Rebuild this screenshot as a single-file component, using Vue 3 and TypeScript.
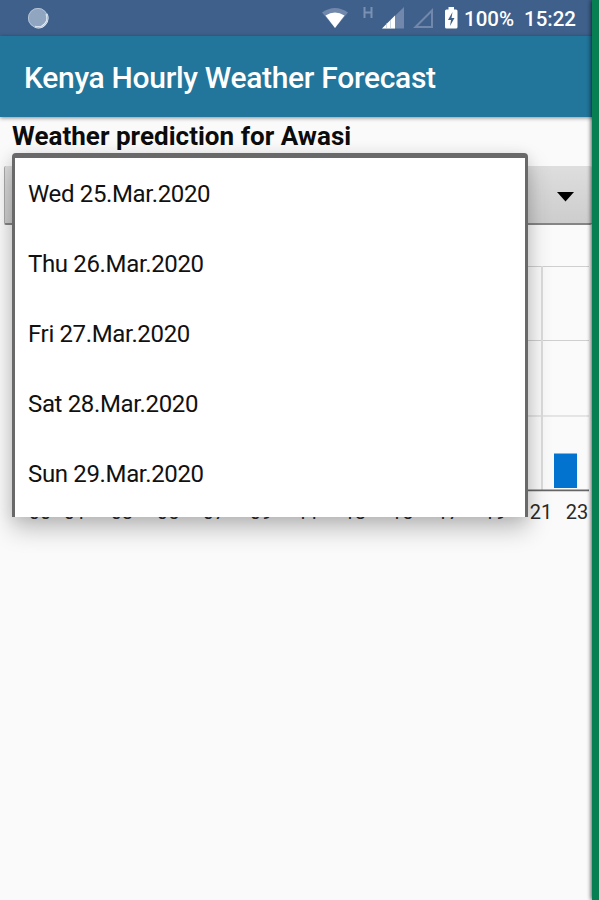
<script setup lang="ts">
const days: string[] = ['Wed 25.Mar.2020', 'Thu 26.Mar.2020', 'Fri 27.Mar.2020', 'Sat 28.Mar.2020', 'Sun 29.Mar.2020']

interface Tick { label: string; x: number }
const ticks: Tick[] = [
  { label: '00', x: 40 }, { label: '01', x: 75 }, { label: '03', x: 122 }, { label: '05', x: 168 },
  { label: '07', x: 214 }, { label: '09', x: 261 }, { label: '11', x: 308 }, { label: '13', x: 355 },
  { label: '15', x: 402 }, { label: '17', x: 448 }, { label: '19', x: 495 }, { label: '21', x: 541 },
  { label: '23', x: 577 },
]
const gridRows: number[] = [266.5, 340.5, 416]
</script>

<template>
  <div class="screen">
    <header class="status">
      <svg class="sync" width="22" height="22" viewBox="0 0 22 22">
        <circle cx="11" cy="11" r="10" fill="#8fa5c0" />
        <path d="M19.500 7A9.300 9.300 0 0 1 8 19.700" fill="none" stroke="#eef4f9" stroke-width="2.200" />
        <circle cx="11" cy="11" r="9.600" fill="none" stroke="#b4c3d5" stroke-width="1" />
      </svg>
      <svg class="icons" width="140" height="36" viewBox="320 0 140 36">
        <path d="M322 12.500Q335 3.500 348 12.500L335 28Z" fill="#7187ab" />
        <path d="M325.500 15.500Q335 9.500 344.500 15.500L335 28Z" fill="#fff" />
        <path d="M364.500 7V18M371.500 7V18M364.500 12.500H371.500" stroke="#7c90b2" stroke-width="2" fill="none" />
        <path d="M382 28.500L404 7V28.500Z" fill="#7187ab" />
        <path d="M382 28.500L395 15.500V28.500Z" fill="#fff" />
        <path d="M386.500 23V28M390.500 20V28" stroke="#aebbd0" stroke-width=".6" />
        <path d="M415.500 27L432 10.500V27Z" fill="none" stroke="#7187ab" stroke-width="2" />
        <path d="M448.500 7H454V9.500H456Q457.500 9.500 457.500 11V27Q457.500 28.500 456 28.500H446.500Q445 28.500 445 27V11Q445 9.500 446.500 9.500H448.500Z" fill="#fff" />
        <path d="M452.500 12L448 20H451L450 26L454.500 18H451.500Z" fill="#3f608b" />
      </svg>
      <span class="battery">100%</span>
      <span class="clock">15:22</span>
    </header>
    <div class="bar"><h1>Kenya Hourly Weather Forecast</h1></div>
    <main class="content">
      <h2>Weather prediction for Awasi</h2>
      <div class="spinner"><svg class="arrow" width="17" height="10" viewBox="0 0 17 10"><path d="M0 0H17L8.500 9.500Z" fill="#000" /></svg></div>
      <svg class="chart" width="592" height="305" viewBox="0 226 592 305">
        <path v-for="y in gridRows" :key="y" :d="`M28 ${y}H589`" stroke="#cfcfcf" />
        <path d="M542 266V490" stroke="#dcdcdc" stroke-width="2" />
        <rect x="554" y="453.500" width="23" height="34.500" fill="#0274d0" />
        <path d="M28 490.300H589" stroke="#666" stroke-width="1.800" />
        <text v-for="t in ticks" :key="t.label" :x="t.x" y="519" text-anchor="middle">{{ t.label }}</text>
      </svg>
      <div class="popup">
        <ul class="list">
          <li v-for="day in days" :key="day"><span>{{ day }}</span></li>
        </ul>
      </div>
    </main>
    <div class="edge"></div>
  </div>
</template>

<style>
body { margin: 0; }
</style>

<style scoped>
.screen { position: relative; width: 599px; height: 900px; overflow: hidden; background: #fafafa; font-family: Roboto, sans-serif; display: flex; flex-direction: column; }
.status { flex: none; height: 36px; background: #3f608b; color: #fff; display: flex; align-items: center; box-sizing: border-box; padding-left: 27px; }
.sync { flex: none; }
.icons { flex: none; margin-left: 271px; }
.battery, .clock { font-size: 20.5px; font-weight: 500; line-height: 36px; padding-top: 2px; white-space: nowrap; }
.battery { width: 60px; flex: none; margin-left: 4px; }
.bar { flex: none; height: 81px; background: #22759b; display: flex; align-items: center; padding-left: 24px; box-shadow: 0 1px 4px rgba(0, 0, 0, .45); z-index: 1; }
h1 { margin: 2px 0 0; color: #fff; font-size: 30px; line-height: 40px; font-weight: 500; letter-spacing: -.31px; white-space: nowrap; }
.content { position: relative; flex: 1; }
h2 { margin: 0; padding: 1px 0 0 12px; height: 48px; font-size: 26px; line-height: 36px; font-weight: 700; letter-spacing: .03px; color: #0c0c0c; white-space: nowrap; }
.spinner { box-sizing: border-box; width: 588px; height: 59px; margin-left: 4px; display: flex; align-items: center; justify-content: flex-end; padding-right: 18px; background: linear-gradient(#dedede, #cdcdcd); border: solid #aaa; border-width: 0 0 2px 1px; border-bottom-color: #858585; border-radius: 2px; }
.arrow { flex: none; margin-top: 4px; }
.chart { display: block; margin-top: 1px; }
.chart text { font-size: 20px; fill: #2a2a2a; }
.popup { position: absolute; left: 12px; top: 36px; width: 516px; height: 364px; box-sizing: border-box; background: #fff; border: solid #696969; border-width: 5px 3px 0; border-radius: 4px 4px 0 0; box-shadow: 0 12px 24px rgba(0, 0, 0, .24), 0 2px 14px rgba(0, 0, 0, .09); }
.list { list-style: none; margin: 0; padding: 1px 0 0 13px; }
li { height: 70px; display: flex; align-items: center; font-size: 24px; letter-spacing: -.35px; color: #111; white-space: nowrap; }
.edge { position: absolute; right: 0; top: 0; bottom: 0; width: 7px; background: #087f52; box-shadow: -1px 0 4px rgba(0, 0, 0, .65); z-index: 2; }
</style>
